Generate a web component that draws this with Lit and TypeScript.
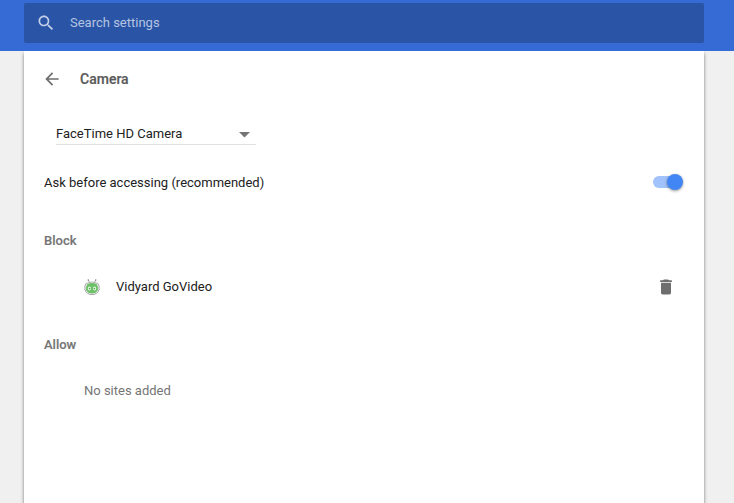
import { LitElement, html, css, svg } from "lit";
import { customElement, property } from "lit/decorators.js";

const PATHS: Record<string, string> = {
  search:
    "M15.5 14h-.79l-.28-.27C15.41 12.59 16 11.11 16 9.5 16 5.91 13.09 3 9.5 3S3 5.91 3 9.5 5.91 16 9.5 16c1.61 0 3.09-.59 4.23-1.57l.27.28v.79l5 4.99L20.49 19l-4.99-5zm-6 0C7.01 14 5 11.99 5 9.5S7.01 5 9.5 5 14 7.01 14 9.5 11.99 14 9.5 14z",
  back: "M20 11H7.83l5.59-5.59L12 4l-8 8 8 8 1.41-1.41L7.83 13H20v-2z",
  remove: "M6 19c0 1.1.9 2 2 2h8c1.1 0 2-.9 2-2V7H6v12zM19 4h-3.5l-1-1h-5l-1 1H5v2h14V4z",
};

@customElement("settings-icon")
class SettingsIcon extends LitElement {
  @property() name = "search";
  static styles = css`
    :host { display: block; width: 20px; height: 20px; flex: none; }
    svg { display: block; width: 100%; height: 100%; fill: currentColor; }
  `;
  render() {
    return html`<svg viewBox="0 0 24 24">${svg`<path d=${PATHS[this.name]}></path>`}</svg>`;
  }
}

@customElement("settings-toggle")
class SettingsToggle extends LitElement {
  static styles = css`
    :host { display: block; flex: none; }
    .bar {
      display: flex; align-items: center; justify-content: flex-end;
      width: 28px; height: 12px; border-radius: 6px; background: #a1c2fa;
    }
    .knob {
      width: 16px; height: 16px; margin-right: -2px; flex: none;
      border-radius: 50%; background: #4285f4;
      box-shadow: 0 1px 3px rgba(0, 0, 0, 0.4);
    }
  `;
  render() {
    return html`<div class="bar"><div class="knob"></div></div>`;
  }
}

@customElement("app-root")
class AppRoot extends LitElement {
  static styles = css`
    :host {
      display: flex; flex-direction: column; height: 503px; overflow: hidden;
      background: #f0f0f0; color: #212121;
      font: 13px/20px Roboto, sans-serif;
    }
    * { box-sizing: border-box; }
    header { height: 51px; padding: 3px 30px 8px 24px; background: #366bd6; flex: none; }
    .search {
      display: flex; align-items: center; height: 40px; padding-left: 12px; gap: 14px;
      border-radius: 2px; background: #2a54a6; color: #b5c4e2;
    }
    .search settings-icon { color: #c3cfe8; }
    main {
      flex: 1; margin: 0 30px 0 24px; padding: 0 20px; background: #fff;
      box-shadow: 0 2px 2px rgba(0, 0, 0, 0.14), 0 1px 5px rgba(0, 0, 0, 0.12), 0 3px 3px rgba(0, 0, 0, 0.3);
      clip-path: inset(0 -8px 0 -8px);
    }
    .title { display: flex; align-items: center; height: 56px; margin-left: -2px; gap: 18px; color: #5a5a5a; }
    h1 { margin: 0; font-size: 14px; font-weight: 500; -webkit-text-stroke: 0.2px; }
    .title settings-icon { color: #6e6e6e; }
    .select {
      display: flex; align-items: center; justify-content: space-between;
      width: 200px; height: 24px; margin: 14px 0 0 12px; padding: 2px 6px 0 0;
      border-bottom: 1px solid #e0e0e0;
    }
    .caret { width: 11px; height: 6px; fill: #757575; margin-top: 2px; }
    .row { display: flex; align-items: center; justify-content: space-between; height: 48px; }
    .ask { margin-top: 13px; padding-right: 3px; }
    .ask span { margin-top: 2px; }
    h2 { margin: 0; font-size: 13px; line-height: 20px; font-weight: 500; color: #757575; -webkit-text-stroke: 0.15px; }
    .block { margin-top: 25px; }
    .site { margin-top: 12px; padding: 0 8px 0 40px; }
    .name { display: flex; align-items: center; gap: 16px; }
    .favicon { width: 16px; height: 16px; }
    .site settings-icon { color: #6e6e6e; }
    .allow { margin-top: 24px; }
    .empty { margin: 26px 0 0 40px; color: #757575; }
  `;
  render() {
    return html`
      <header>
        <div class="search"><settings-icon name="search"></settings-icon><span>Search settings</span></div>
      </header>
      <main>
        <div class="title"><settings-icon name="back"></settings-icon><h1>Camera</h1></div>
        <div class="select">
          <span>FaceTime HD Camera</span>
          <svg class="caret" viewBox="0 0 11 6"><path d="M0 0H11L5.5 5.5Z"></path></svg>
        </div>
        <div class="row ask"><span>Ask before accessing (recommended)</span><settings-toggle></settings-toggle></div>
        <h2 class="block">Block</h2>
        <div class="row site">
          <div class="name">
            <svg class="favicon" viewBox="0 0 16 16" fill="none">
              <path d="M5.5 3.5L4.3 1M10.5 3.5L11.7 1" stroke="#8b8b8b" stroke-width=".8"></path>
              <circle cx="4.3" cy="1" r=".8" fill="#888"></circle>
              <circle cx="11.7" cy="1" r=".8" fill="#888"></circle>
              <path d="M2.6 3.8Q.2 6.5 .9 10.5Q2.4 15.5 8 15.5T15.1 10.5Q15.8 6.5 13.4 3.8" stroke="#929292" stroke-width=".9"></path>
              <path d="M3 4.3Q8 1.6 13 4.3" stroke="#999" stroke-width=".8"></path>
              <path d="M2.9 5.4Q8 2.8 13.1 5.4Q14.8 9.4 13.4 12Q11.4 14.5 8 14.5T2.6 12Q1.2 9.4 2.9 5.4Z" fill="#6cc168"></path>
              <ellipse cx="5.4" cy="9.5" rx="1.6" ry="2" fill="#e4f5e2"></ellipse>
              <ellipse cx="10.6" cy="9.5" rx="1.6" ry="2" fill="#e4f5e2"></ellipse>
              <circle cx="5.6" cy="9.6" r=".8" fill="#54a854"></circle>
              <circle cx="10.4" cy="9.6" r=".8" fill="#54a854"></circle>
            </svg>
            <span>Vidyard GoVideo</span>
          </div>
          <settings-icon name="remove"></settings-icon>
        </div>
        <h2 class="allow">Allow</h2>
        <div class="empty">No sites added</div>
      </main>
    `;
  }
}
